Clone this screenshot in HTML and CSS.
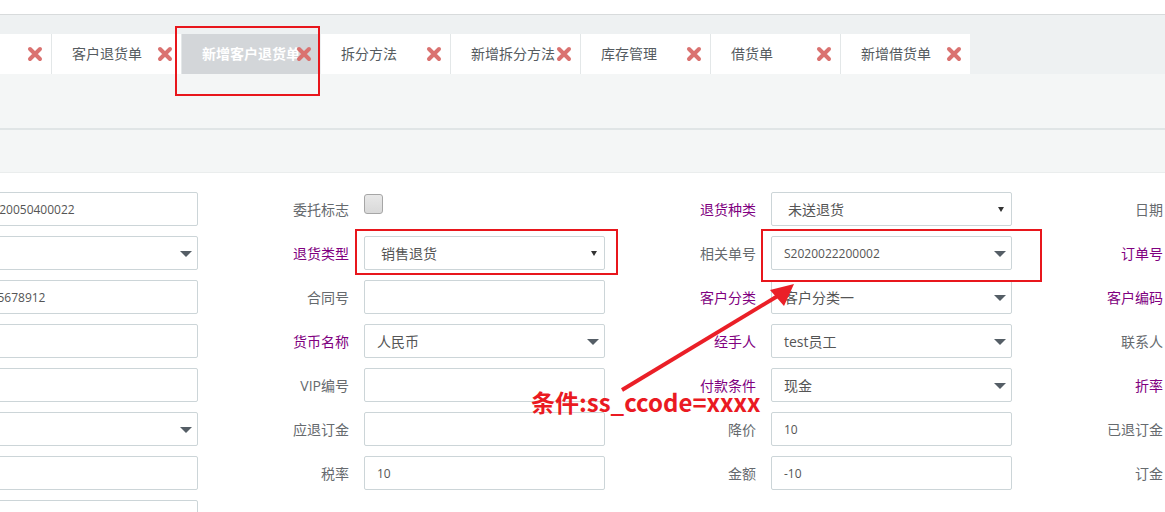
FILE: index.html
```html
<!DOCTYPE html>
<html lang="zh">
<head>
<meta charset="utf-8">
<title>新增客户退货单</title>
<link rel="stylesheet" href="styles.css">
</head>
<body>
<div class="page">
  <div class="topbar"></div>
  <div class="tabbar">
    <div class="tabs">
      <div class="tab"><span class="tab-label">客户资料</span><span class="close"><svg viewBox="0 0 16 16"><path d="M3 3L13 13M13 3L3 13"/></svg></span></div>
      <div class="tab"><span class="tab-label">客户退货单</span><span class="close"><svg viewBox="0 0 16 16"><path d="M3 3L13 13M13 3L3 13"/></svg></span></div>
      <div class="tab active"><span class="tab-label">新增客户退货单</span><span class="close"><svg viewBox="0 0 16 16"><path d="M3 3L13 13M13 3L3 13"/></svg></span></div>
      <div class="tab"><span class="tab-label">拆分方法</span><span class="close"><svg viewBox="0 0 16 16"><path d="M3 3L13 13M13 3L3 13"/></svg></span></div>
      <div class="tab"><span class="tab-label">新增拆分方法</span><span class="close"><svg viewBox="0 0 16 16"><path d="M3 3L13 13M13 3L3 13"/></svg></span></div>
      <div class="tab"><span class="tab-label">库存管理</span><span class="close"><svg viewBox="0 0 16 16"><path d="M3 3L13 13M13 3L3 13"/></svg></span></div>
      <div class="tab"><span class="tab-label">借货单</span><span class="close"><svg viewBox="0 0 16 16"><path d="M3 3L13 13M13 3L3 13"/></svg></span></div>
      <div class="tab"><span class="tab-label">新增借货单</span><span class="close"><svg viewBox="0 0 16 16"><path d="M3 3L13 13M13 3L3 13"/></svg></span></div>
    </div>
  </div>
  <div class="band band-1"></div>
  <div class="band band-2"></div>

  <div class="form">
    <!-- row 1 -->
    <div class="lbl">单据编号</div><div class="ctl"><div class="input"><span class="num">TH2020050400022</span></div></div>
    <div class="lbl">委托标志</div><div class="ctl"><span class="checkbox"></span></div>
    <div class="lbl purple">退货种类</div><div class="ctl"><div class="input select native"><span class="val">未送退货</span><span class="arrow-sm"></span></div></div>
    <div class="lbl">日期</div><div class="ctl"></div>
    <!-- row 2 -->
    <div class="lbl">客户</div><div class="ctl"><div class="input select"><span class="caret"></span></div></div>
    <div class="lbl purple">退货类型</div><div class="ctl"><div class="input select native"><span class="val">销售退货</span><span class="arrow-sm"></span></div></div>
    <div class="lbl">相关单号</div><div class="ctl"><div class="input select"><span class="num">S2020022200002</span><span class="caret"></span></div></div>
    <div class="lbl purple">订单号</div><div class="ctl"></div>
    <!-- row 3 -->
    <div class="lbl">电话</div><div class="ctl"><div class="input"><span class="num">12345678912</span></div></div>
    <div class="lbl">合同号</div><div class="ctl"><div class="input"></div></div>
    <div class="lbl purple">客户分类</div><div class="ctl"><div class="input select"><span class="val">客户分类一</span><span class="caret"></span></div></div>
    <div class="lbl purple">客户编码</div><div class="ctl"></div>
    <!-- row 4 -->
    <div class="lbl">地址</div><div class="ctl"><div class="input"></div></div>
    <div class="lbl purple">货币名称</div><div class="ctl"><div class="input select"><span class="val">人民币</span><span class="caret"></span></div></div>
    <div class="lbl purple">经手人</div><div class="ctl"><div class="input select"><span class="val">test员工</span><span class="caret"></span></div></div>
    <div class="lbl">联系人</div><div class="ctl"></div>
    <!-- row 5 -->
    <div class="lbl">邮编</div><div class="ctl"><div class="input"></div></div>
    <div class="lbl">VIP编号</div><div class="ctl"><div class="input"></div></div>
    <div class="lbl purple">付款条件</div><div class="ctl"><div class="input select"><span class="val">现金</span><span class="caret"></span></div></div>
    <div class="lbl purple">折率</div><div class="ctl"></div>
    <!-- row 6 -->
    <div class="lbl">仓库</div><div class="ctl"><div class="input select"><span class="caret"></span></div></div>
    <div class="lbl">应退订金</div><div class="ctl"><div class="input"></div></div>
    <div class="lbl">降价</div><div class="ctl"><div class="input"><span class="num">10</span></div></div>
    <div class="lbl">已退订金</div><div class="ctl"></div>
    <!-- row 7 -->
    <div class="lbl">备注</div><div class="ctl"><div class="input"></div></div>
    <div class="lbl">税率</div><div class="ctl"><div class="input"><span class="num">10</span></div></div>
    <div class="lbl">金额</div><div class="ctl"><div class="input"><span class="num">-10</span></div></div>
    <div class="lbl">订金</div><div class="ctl"></div>
    <!-- row 8 -->
    <div class="lbl">摘要</div><div class="ctl"><div class="input"></div></div>
  </div>

  <div class="mark mark-tab"></div>
  <div class="mark mark-type"></div>
  <div class="mark mark-ref"></div>
  <svg class="arrow" viewBox="0 0 1165 512" width="1165" height="512">
    <line x1="622" y1="390" x2="781" y2="294"/>
    <polygon points="794,284 770,290 784,306"/>
  </svg>
  <div class="note">条件:ss_ccode=xxxx</div>
</div>
</body>
</html>
```

FILE: styles.css
```css
html, body {
  margin: 0;
  padding: 0;
  background: #ffffff;
  overflow: hidden;
}
.page {
  position: relative;
  width: 1165px;
  height: 512px;
  overflow: hidden;
  font-family: "Open Sans", "Noto Sans CJK SC", sans-serif;
  color: #555555;
}
.topbar {
  height: 14px;
  background: #ffffff;
  border-bottom: 1px solid #d8dbdc;
}
.tabbar {
  height: 59px;
  background: #eef1f2;
  padding-top: 19px;
  box-sizing: border-box;
}
.tabs {
  display: flex;
  margin-left: -78px;
  height: 40px;
}
.tab {
  position: relative;
  width: 130px;
  height: 40px;
  box-sizing: border-box;
  padding-left: 20px;
  padding-bottom: 3px;
  background: #ffffff;
  border-right: 1px solid #e3e7e8;
  display: flex;
  align-items: center;
  font-size: 14px;
  color: #555b60;
  white-space: nowrap;
  flex: none;
}
.tab.active {
  width: 139px;
  background: #d3d6d9;
  border-right-color: #eef1f2;
  color: #ffffff;
  font-weight: bold;
}
.tab:last-child {
  border-right: none;
  width: 129px;
}
.close {
  position: absolute;
  right: 8px;
  top: 12px;
  width: 16px;
  height: 16px;
}
.close svg {
  display: block;
  width: 16px;
  height: 16px;
}
.close path {
  stroke: #da7270;
  stroke-width: 4;
  stroke-linecap: round;
  fill: none;
}
.band {
  background: #f4f6f6;
}
.band-1 {
  height: 54px;
  border-bottom: 2px solid #e0e5e6;
}
.band-2 {
  height: 42px;
  border-bottom: 1px solid #eaeded;
}
.form {
  display: grid;
  grid-template-columns: repeat(4, 166px 241px);
  grid-auto-rows: 34px;
  row-gap: 10px;
  margin-top: 19px;
  margin-left: -209px;
}
.lbl {
  display: flex;
  align-items: center;
  justify-content: flex-end;
  padding-right: 15px;
  font-size: 14px;
  color: #666a6e;
  white-space: nowrap;
}
.lbl.purple {
  color: #800080;
}
.ctl {
  display: flex;
  align-items: center;
}
.input {
  position: relative;
  width: 241px;
  height: 34px;
  box-sizing: border-box;
  border: 1px solid #ccd5d8;
  border-radius: 2px;
  background: #ffffff;
  padding: 0 12px;
  display: flex;
  align-items: center;
  font-size: 14px;
  color: #555555;
  white-space: nowrap;
}
.input .num {
  font-size: 12px;
}
.input .val {
  font-size: 14px;
}
.input.native {
  padding-left: 16px;
}
.caret {
  position: absolute;
  right: 5px;
  top: 14px;
  width: 0;
  height: 0;
  border-left: 6px solid transparent;
  border-right: 6px solid transparent;
  border-top: 6px solid #555e66;
}
.arrow-sm {
  position: absolute;
  right: 7px;
  top: 14px;
  width: 0;
  height: 0;
  border-left: 3px solid transparent;
  border-right: 3px solid transparent;
  border-top: 5px solid #333333;
}
.checkbox {
  display: block;
  width: 17px;
  height: 18px;
  margin-top: -10px;
  border: 1px solid #a6a6a6;
  border-radius: 3px;
  background: linear-gradient(#e8e8e8, #d9d9d9);
}
.mark {
  position: absolute;
  border: 2px solid #e8161c;
  box-sizing: border-box;
}
.mark-tab {
  left: 175px;
  top: 26px;
  width: 145px;
  height: 70px;
}
.mark-type {
  left: 355px;
  top: 229px;
  width: 263px;
  height: 46px;
}
.mark-ref {
  left: 761px;
  top: 229px;
  width: 281px;
  height: 53px;
}
.arrow {
  position: absolute;
  left: 0;
  top: 0;
}
.arrow line {
  stroke: #ea1f27;
  stroke-width: 4;
}
.arrow polygon {
  fill: #ea1f27;
}
.note {
  position: absolute;
  left: 531px;
  top: 386px;
  font-family: "Noto Sans CJK SC", sans-serif;
  font-size: 24px;
  font-weight: bold;
  line-height: 32px;
  color: #ea1a22;
  white-space: nowrap;
}
```
